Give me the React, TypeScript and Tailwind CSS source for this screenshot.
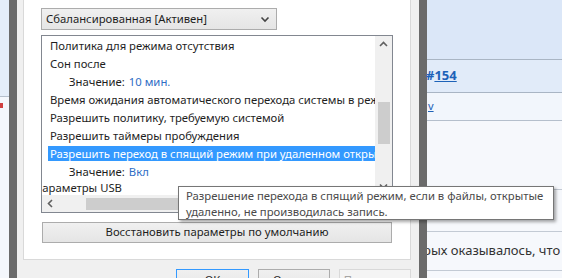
import { ReactNode } from "react";

function Chevron({ dir }: { dir: "up" | "down" | "left" }) {
  const d =
    dir === "up"
      ? "M1 5 L4.5 1.5 L8 5"
      : dir === "down"
      ? "M1 1.5 L4.5 5 L8 1.5"
      : "M5 1 L1.5 4.5 L5 8";
  const w = dir === "left" ? 7 : 9;
  const h = dir === "left" ? 9 : 7;
  return (
    <svg width={w} height={h} viewBox={`0 0 ${w} ${h}`}>
      <path d={d} fill="none" stroke="#606060" strokeWidth="1.6" />
    </svg>
  );
}

function Row({
  children,
  level = 0,
  selected = false,
}: {
  children: ReactNode;
  level?: number;
  selected?: boolean;
}) {
  return (
    <div className="h-[18px] flex items-center whitespace-nowrap">
      <div
        className={
          "h-[15px] flex items-center leading-[15px] pr-[80px] " +
          (level === 0 ? "ml-[6px] pl-[2px] " : "ml-[25px] pl-[2px] ") +
          (selected ? "bg-[#3399ff] text-white flex-1" : "text-[#1e1e1e]")
        }
      >
        {children}
      </div>
    </div>
  );
}

function Value({ label, value }: { label: string; value: string }) {
  return (
    <Row level={1}>
      <span>{label}</span>
      <span className="ml-[4px] text-[#2e6dc5]">{value}</span>
    </Row>
  );
}

function TreeList() {
  return (
    <div className="mt-[5px] w-[352px] h-[178px] border border-[#828790] bg-white grid grid-cols-[333px_17px] grid-rows-[159px_17px]">
      <div className="overflow-hidden">
        <Row>Политика для режима отсутствия</Row>
        <Row>Сон после</Row>
        <Value label="Значение:" value="10 мин." />
        <Row>Время ожидания автоматического перехода системы в режим сна</Row>
        <Row>Разрешить политику, требуемую системой</Row>
        <Row>Разрешить таймеры пробуждения</Row>
        <Row selected>
          Разрешить переход в спящий режим при удаленном открытии файлов
        </Row>
        <Value label="Значение:" value="Вкл" />
        <div className="h-[17px] flex items-center whitespace-nowrap text-[#1e1e1e]">
          <span className="ml-[-8px]">Параметры USB</span>
        </div>
      </div>
      <div className="bg-[#f0f0f0] flex flex-col items-center">
        <div className="h-[17px] flex items-center justify-center">
          <Chevron dir="up" />
        </div>
        <div className="mt-[49px] w-[12px] h-[42px] bg-[#cdcdcd]" />
        <div className="mt-[34px] h-[17px] flex items-center justify-center">
          <Chevron dir="down" />
        </div>
      </div>
      <div className="bg-[#f0f0f0] flex items-center">
        <div className="w-[17px] flex items-center justify-center">
          <Chevron dir="left" />
        </div>
        <div className="ml-[27px] h-[12px] w-[160px] bg-[#cdcdcd]" />
      </div>
      <div className="bg-[#f0f0f0]" />
    </div>
  );
}

function DialogButton({
  children,
  primary = false,
  disabled = false,
  width,
}: {
  children: ReactNode;
  primary?: boolean;
  disabled?: boolean;
  width: string;
}) {
  return (
    <div
      className={
        width +
        " h-[23px] flex items-center justify-center border " +
        (primary
          ? "border-[#3399ff] bg-gradient-to-b from-[#f0f0f0] to-[#e5e5e5] text-[#1e1e1e]"
          : disabled
          ? "border-[#d9d9d9] bg-[#f4f4f4] text-[#a6a6a6]"
          : "border-[#acacac] bg-gradient-to-b from-[#f0f0f0] to-[#e5e5e5] text-[#1e1e1e]")
      }
    >
      {children}
    </div>
  );
}

function WebPage() {
  return (
    <div className="flex-1 flex flex-col bg-[#f6f8fc] text-[13px]">
      <div className="h-[60px] bg-[#dbe7f8] border-b border-[#a9b5c4]" />
      <div className="h-[33px] bg-[#e1ebf9] border-b border-[#a9b5c4] flex items-center">
        <span className="font-bold text-[#1d62b8] ml-[-1px]">
          #<span className="underline">154</span>
        </span>
      </div>
      <div className="h-[28px] bg-[#f2f6fc] border-b border-[#b5bfcc] flex items-center pl-[1px]">
        <span className="text-[#1d62b8] underline text-[11px]">v</span>
      </div>
      <div className="h-[69px] border-b border-[#c3cad4]" />
      <div className="h-[42px] border-b border-[#c3cad4]" />
      <div className="h-[39px] border-b border-[#c3cad4] flex items-center whitespace-nowrap overflow-hidden text-[#333333]">
        <span className="ml-[-4px]">рых оказывалось, что</span>
      </div>
    </div>
  );
}

export default function App() {
  return (
    <div className="relative flex w-[562px] h-[278px] overflow-hidden font-['Noto_Sans',sans-serif] text-[11.3px] text-[#1e1e1e]">
      <div className="w-[9px] flex flex-col bg-[#f4f7fc]">
        <div className="h-[97px] bg-[#e4edf9] border-b border-[#b5bfcc]" />
        <div className="mt-[6px] w-[3px] h-[5px] bg-[#d04040]" />
      </div>
      <div className="w-[8px] bg-[#6b6b6b]" />

      <div className="w-[402px] bg-[#f0f0f0] flex flex-col pl-[6px]">
        <div className="w-[388px] bg-white border-x border-b border-[#d9d9d9] pl-[17px] pt-[8px] pb-[16px]">
          <div className="w-[236px] h-[22px] border border-[#acacac] bg-gradient-to-b from-[#f0f0f0] to-[#e5e5e5] flex items-center justify-between pl-[4px] pr-[4px]">
            <span>Сбалансированная [Активен]</span>
            <svg width="10" height="7" viewBox="0 0 10 7" className="mr-[2px]">
              <path d="M1.5 1.5 L5 5 L8.5 1.5" fill="none" stroke="#444" strokeWidth="1.6" />
            </svg>
          </div>
          <TreeList />
          <div className="mt-[9px] ml-[1px] w-[350px] h-[21px] border border-[#acacac] bg-gradient-to-b from-[#f0f0f0] to-[#e5e5e5] flex items-center justify-center">
            Восстановить параметры по умолчанию
          </div>
        </div>
        <div className="mt-[9px] flex justify-end gap-[9px] pr-[8px]">
          <DialogButton primary width="w-[73px]">ОК</DialogButton>
          <DialogButton width="w-[72px]">Отмена</DialogButton>
          <DialogButton disabled width="w-[72px]">Применить</DialogButton>
        </div>
      </div>

      <div className="w-[8px] bg-[#6b6b6b]" />
      <WebPage />

      <div className="absolute left-[178px] top-[186px] w-[376px] h-[34px] border border-[#767676] bg-white shadow-[2px_2px_3px_rgba(0,0,0,0.35)] pl-[7px] pt-[1px] leading-[16px] text-[#4a4a4a] whitespace-nowrap">
        <div>Разрешение перехода в спящий режим, если в файлы, открытые</div>
        <div>удаленно, не производилась запись.</div>
      </div>
    </div>
  );
}
